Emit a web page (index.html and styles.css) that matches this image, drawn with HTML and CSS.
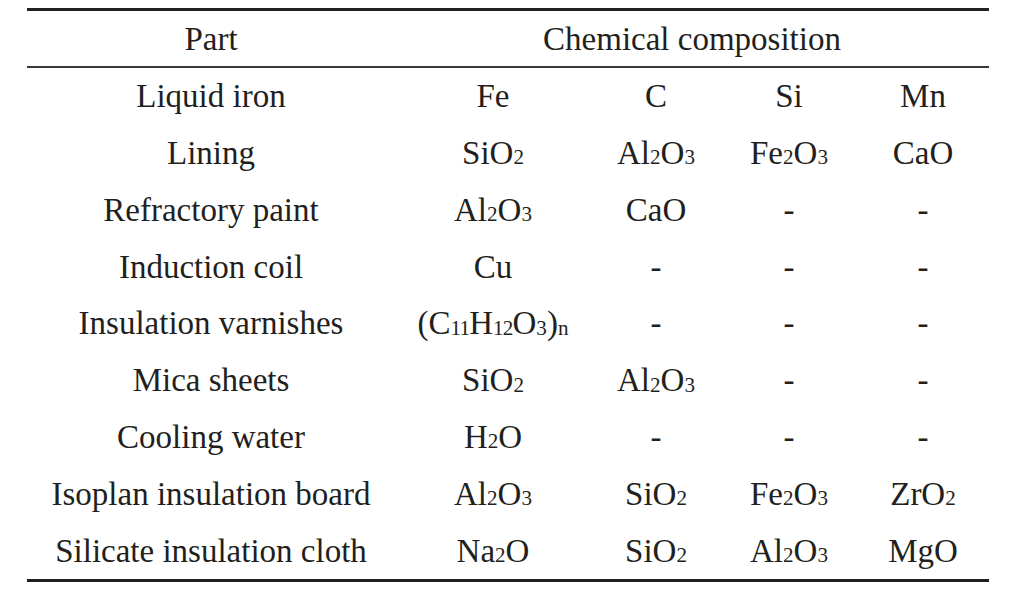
FILE: index.html
```html
<!DOCTYPE html>
<html lang="en">
<head>
<meta charset="utf-8">
<title>Chemical composition</title>
<link rel="stylesheet" href="styles.css">
</head>
<body>
<div class="tbl">
  <div class="cell head">Part</div>
  <div class="cell head span4">Chemical composition</div>

  <div class="cell">Liquid iron</div>
  <div class="cell">Fe</div>
  <div class="cell">C</div>
  <div class="cell">Si</div>
  <div class="cell">Mn</div>

  <div class="cell">Lining</div>
  <div class="cell">SiO<sub>2</sub></div>
  <div class="cell">Al<sub>2</sub>O<sub>3</sub></div>
  <div class="cell">Fe<sub>2</sub>O<sub>3</sub></div>
  <div class="cell">CaO</div>

  <div class="cell">Refractory paint</div>
  <div class="cell">Al<sub>2</sub>O<sub>3</sub></div>
  <div class="cell">CaO</div>
  <div class="cell">-</div>
  <div class="cell">-</div>

  <div class="cell">Induction coil</div>
  <div class="cell">Cu</div>
  <div class="cell">-</div>
  <div class="cell">-</div>
  <div class="cell">-</div>

  <div class="cell">Insulation varnishes</div>
  <div class="cell">(C<sub class="tight">11</sub>H<sub class="tight">12</sub>O<sub>3</sub>)<sub>n</sub></div>
  <div class="cell">-</div>
  <div class="cell">-</div>
  <div class="cell">-</div>

  <div class="cell">Mica sheets</div>
  <div class="cell">SiO<sub>2</sub></div>
  <div class="cell">Al<sub>2</sub>O<sub>3</sub></div>
  <div class="cell">-</div>
  <div class="cell">-</div>

  <div class="cell">Cooling water</div>
  <div class="cell">H<sub>2</sub>O</div>
  <div class="cell">-</div>
  <div class="cell">-</div>
  <div class="cell">-</div>

  <div class="cell">Isoplan insulation board</div>
  <div class="cell">Al<sub>2</sub>O<sub>3</sub></div>
  <div class="cell">SiO<sub>2</sub></div>
  <div class="cell">Fe<sub>2</sub>O<sub>3</sub></div>
  <div class="cell">ZrO<sub>2</sub></div>

  <div class="cell">Silicate insulation cloth</div>
  <div class="cell">Na<sub>2</sub>O</div>
  <div class="cell">SiO<sub>2</sub></div>
  <div class="cell">Al<sub>2</sub>O<sub>3</sub></div>
  <div class="cell">MgO</div>
</div>
</body>
</html>
```

FILE: styles.css
```css
html, body {
  margin: 0;
  padding: 0;
  background: #ffffff;
}

body {
  font-family: "Liberation Serif", "Times New Roman", serif;
  font-size: 33px;
  color: #231f20;
}

.tbl {
  margin: 8px 0 0 27px;
  width: 962px;
  display: grid;
  grid-template-columns: 368px 196px 130px 136px 132px;
  grid-template-rows: 57px;
  grid-auto-rows: 56.8px;
  border-top: 3px solid #231f20;
  border-bottom: 3px solid #231f20;
}

.cell {
  display: flex;
  align-items: center;
  justify-content: center;
  line-height: 1.1;
  white-space: nowrap;
}

.head {
  border-bottom: 2px solid #3a3637;
  padding-top: 1px;
}

.span4 {
  grid-column: span 4;
}

sub {
  font-size: 0.64em;
  position: relative;
  top: 0.2em;
  vertical-align: baseline;
  line-height: 0;
}

sub.tight {
  letter-spacing: -0.04em;
}
```
